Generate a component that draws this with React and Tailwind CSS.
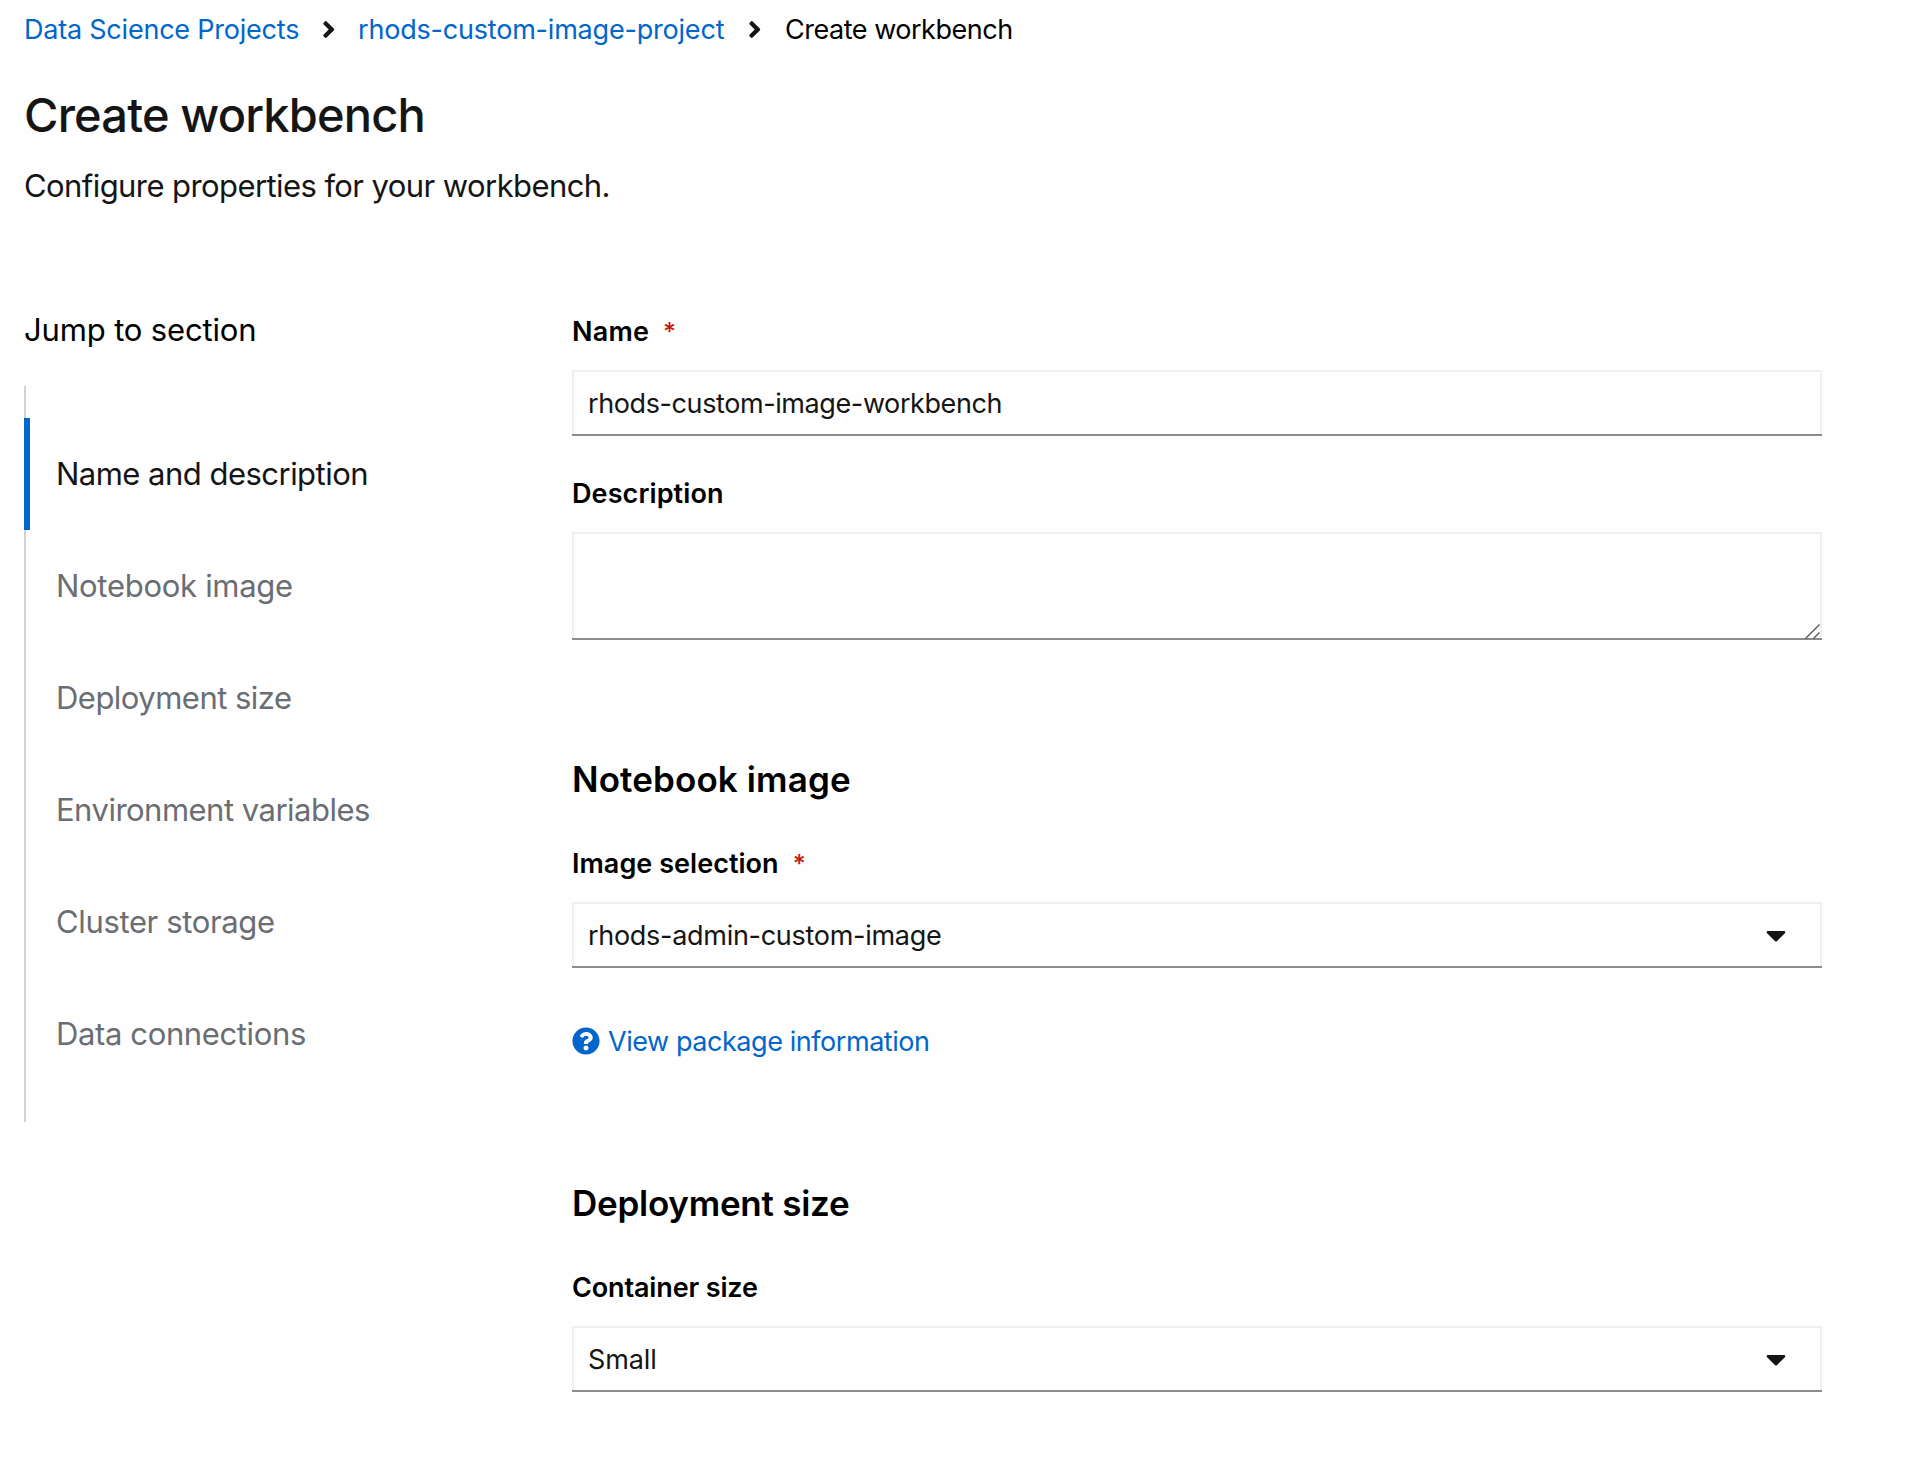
import React from 'react';
import { FaAngleRight, FaCaretDown, FaQuestionCircle } from 'react-icons/fa';

const sections = [
  { label: 'Name and description', spacing: 'tracking-[-0.52px]', active: true },
  { label: 'Notebook image', spacing: 'tracking-[-0.29px]' },
  { label: 'Deployment size', spacing: 'tracking-[-0.52px]' },
  { label: 'Environment variables', spacing: 'tracking-[-0.51px]' },
  { label: 'Cluster storage', spacing: 'tracking-[-0.36px]' },
  { label: 'Data connections', spacing: 'tracking-[-0.37px]' },
];

function Separator() {
  return (
    <svg viewBox="0 0 256 512" className="h-[27px] w-[13.5px] shrink-0 text-[#151515]" fill="currentColor" aria-hidden="true">
      <FaAngleRight size={512} x={-128} y={0} />
    </svg>
  );
}

function Breadcrumb() {
  return (
    <nav className="flex h-10 items-center text-[27px] leading-10">
      <a href="#" className="w-[274px] tracking-[-0.22px] whitespace-nowrap text-[#0066cc]">Data Science Projects</a>
      <span className="flex w-[60px] justify-center pb-0.5 pl-px"><Separator /></span>
      <a href="#" className="w-[366px] tracking-[-0.2px] whitespace-nowrap text-[#0066cc]">rhods-custom-image-project</a>
      <span className="flex w-[61px] justify-center pb-0.5 pl-px"><Separator /></span>
      <span className="tracking-[-0.48px] whitespace-nowrap text-black">Create workbench</span>
    </nav>
  );
}

function JumpLinks() {
  return (
    <aside className="w-[548px] shrink-0">
      <h2 className="h-12 text-[31px] leading-[48px] tracking-[-0.15px] text-black">Jump to section</h2>
      <ul className="mt-8 w-[400px] border-l-2 border-[#d2d2d2] py-8">
        {sections.map((s) => (
          <li
            key={s.label}
            className={
              s.active
                ? '-ml-0.5 flex h-28 items-center border-l-6 border-[#0066cc] pl-[26px] text-[#151515]'
                : 'flex h-28 items-center pl-[30px] text-[#6a6e73]'
            }
          >
            <a href="#" className={`text-[31px] leading-[48px] whitespace-nowrap ${s.spacing}`}>{s.label}</a>
          </li>
        ))}
      </ul>
    </aside>
  );
}

function Label({ children, spacing, required }) {
  return (
    <div className="mb-[17px] flex h-[43px] text-[27px] leading-[44px] font-semibold text-black">
      <span className={spacing}>{children}</span>
      {required && <span className="ml-3.5 text-[25px] font-medium text-[#c9190b]">*</span>}
    </div>
  );
}

function Box({ children, className }) {
  return (
    <div className="border-b-2 border-[#8a8d90]">
      <div className={`flex items-center border-x-2 border-t-2 border-[#f0f0f0] ${className}`}>{children}</div>
    </div>
  );
}

function Select({ value, spacing }) {
  return (
    <Box className="h-16 justify-between pr-7 pl-3.5">
      <span className={`mt-0.5 text-[27px] leading-10 ${spacing}`}>{value}</span>
      <FaCaretDown className="size-8" />
    </Box>
  );
}

function ResizeHandle() {
  return (
    <svg viewBox="0 0 15 15" className="absolute right-0.5 bottom-px size-[15px]" fill="none" stroke="#555" strokeWidth="1.4" aria-hidden="true">
      <path d="M0.5 14.5 14.5 0.5M8.5 14.5 14.5 8.5" />
    </svg>
  );
}

export default function App() {
  return (
    <main className="h-[1478px] w-[1916px] overflow-hidden bg-[#fefefe] pt-2.5 pl-6 font-['Inter',sans-serif] text-[#151515]">
      <Breadcrumb />
      <h1 className="mt-[35px] h-15 text-[47px] leading-[60px] font-medium tracking-[-0.83px]">Create workbench</h1>
      <p className="mt-[17px] h-12 text-[31px] leading-[48px] tracking-[-0.58px]">Configure properties for your workbench.</p>

      <div className="mt-24 flex">
        <JumpLinks />
        <form className="mt-1 w-[1250px]">
          <Label spacing="tracking-[0.2px]" required>Name</Label>
          <Box className="h-16">
            <input
              readOnly
              value="rhods-custom-image-workbench"
              className="h-full w-full bg-transparent px-3.5 text-[27px] tracking-[-0.4px] outline-none"
            />
          </Box>

          <div className="mt-9">
            <Label spacing="tracking-[0.1px]">Description</Label>
            <div className="relative">
              <Box className="h-[106px]">
                <textarea readOnly className="h-full w-full resize-none bg-transparent px-3.5 text-[27px] outline-none" />
              </Box>
              <ResizeHandle />
            </div>
          </div>

          <h2 className="mt-28 mb-9 h-[54px] text-[35px] leading-[54px] font-semibold tracking-[0.11px] text-black">Notebook image</h2>
          <Label spacing="tracking-[0.04px]" required>Image selection</Label>
          <Select value="rhods-admin-custom-image" spacing="tracking-[-0.29px]" />

          <a href="#" className="mt-[53px] flex h-[42px] items-center gap-2 text-[27px] leading-[42px] text-[#0066cc]">
            <FaQuestionCircle className="-mt-0.5 size-7" />
            <span className="tracking-[-0.44px]">View package information</span>
          </a>

          <h2 className="mt-[113px] mb-9 h-[54px] text-[35px] leading-[54px] font-semibold tracking-[-0.26px] text-black">Deployment size</h2>
          <Label spacing="tracking-[-0.14px]">Container size</Label>
          <Select value="Small" spacing="tracking-[-0.1px]" />
        </form>
      </div>
    </main>
  );
}
